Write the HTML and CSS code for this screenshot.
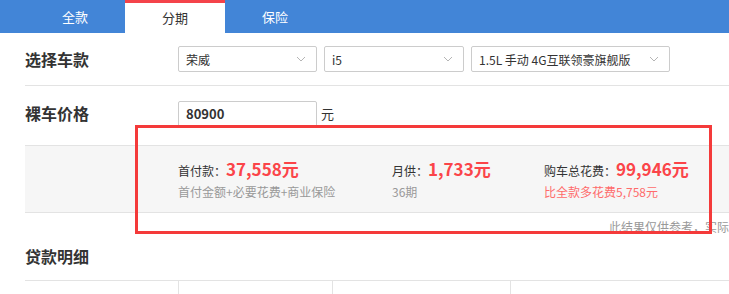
FILE: index.html
```html
<!DOCTYPE html>
<html lang="zh-CN">
<head>
  <meta charset="UTF-8">
  <title>购车计算器 - 分期</title>
  <link rel="stylesheet" href="styles.css">
</head>
<body>
  <div class="page">
    <!-- 顶部标签 -->
    <div class="tabs">
      <span class="tab">全款</span>
      <span class="tab active">分期</span>
      <span class="tab">保险</span>
    </div>

    <!-- 选择车款 -->
    <div class="row row-select">
      <div class="label">选择车款</div>
      <div class="controls">
        <div class="select w1"><span>荣威</span><svg class="arrow" viewBox="0 0 10 6"><path d="M1 1l4 4 4-4" fill="none" stroke="#b5b5b5" stroke-width="1"/></svg></div>
        <div class="select w2"><span>i5</span><svg class="arrow" viewBox="0 0 10 6"><path d="M1 1l4 4 4-4" fill="none" stroke="#b5b5b5" stroke-width="1"/></svg></div>
        <div class="select w3"><span>1.5L 手动 4G互联领豪旗舰版</span><svg class="arrow" viewBox="0 0 10 6"><path d="M1 1l4 4 4-4" fill="none" stroke="#b5b5b5" stroke-width="1"/></svg></div>
      </div>
    </div>

    <!-- 裸车价格 -->
    <div class="row row-price">
      <div class="label">裸车价格</div>
      <div class="controls">
        <div class="price-input">80900</div>
        <span class="unit">元</span>
      </div>
    </div>

    <!-- 结果 -->
    <div class="result">
      <div class="result-item first">
        <div class="line">首付款：<span class="num">37,558元</span></div>
        <div class="sub">首付金额+必要花费+商业保险</div>
      </div>
      <div class="result-item">
        <div class="line">月供：<span class="num">1,733元</span></div>
        <div class="sub">36期</div>
      </div>
      <div class="result-item">
        <div class="line">购车总花费：<span class="num">99,946元</span></div>
        <div class="sub sub-red">比全款多花费5,758元</div>
      </div>
    </div>
    <div class="note">此结果仅供参考，实际</div>

    <!-- 贷款明细 -->
    <h2 class="section-title">贷款明细</h2>
    <div class="detail-table">
      <div class="cell"></div>
      <div class="cell"></div>
      <div class="cell"></div>
      <div class="cell"></div>
    </div>

    <!-- 标注框 -->
    <div class="highlight"></div>
  </div>
</body>
</html>
```

FILE: styles.css
```css
/* 页面基础 */
html, body {
  margin: 0;
  padding: 0;
  overflow: hidden;
}
body {
  font-family: "Noto Sans CJK SC", "Noto Sans", sans-serif;
  color: #333;
  background-color: #fff;
}
.page {
  position: relative;
  width: 729px;
  height: 294px;
  overflow: hidden;
}

/* 标签栏 */
.tabs {
  display: flex;
  height: 33px;
  padding-left: 25px;
  background-color: #4285d7;
}
.tab {
  width: 100px;
  line-height: 33px;
  text-align: center;
  font-size: 13px;
  color: #fff;
}
.tab.active {
  background-color: #fff;
  color: #333;
  border-top: 3px solid #f4434a;
  line-height: 30px;
}

/* 表单行 */
.row {
  display: flex;
  align-items: center;
  margin-left: 25px;
}
.row-select {
  padding: 13px 0;
  border-bottom: 1px solid #e3e3e3;
}
.row-price {
  padding: 15px 0 0;
  height: 44px;
  align-items: flex-start;
}
.row-price .label {
  line-height: 25px;
}
.label {
  width: 153px;
  font-size: 16px;
  font-weight: bold;
  color: #333;
}
.controls {
  display: flex;
  align-items: center;
  gap: 7px;
}

/* 下拉框 */
.select {
  display: flex;
  align-items: center;
  justify-content: space-between;
  box-sizing: border-box;
  height: 26px;
  padding: 0 10px 0 7px;
  border: 1px solid #ccc;
  border-radius: 2px;
  font-size: 12px;
  color: #333;
}
.select.w1 { width: 139px; }
.select.w2 { width: 140px; }
.select.w3 { width: 199px; }
.arrow {
  width: 10px;
  height: 6px;
}

/* 价格输入 */
.price-input {
  box-sizing: border-box;
  width: 139px;
  height: 26px;
  padding: 0 7px;
  line-height: 24px;
  border: 1px solid #ccc;
  border-radius: 2px;
  font-size: 13px;
  font-weight: bold;
  color: #333;
}
.unit {
  margin-left: -3px;
  font-size: 13px;
  line-height: 24px;
}

/* 结果区 */
.result {
  display: flex;
  align-items: center;
  margin-left: 25px;
  height: 66px;
  background-color: #f6f6f6;
  border-top: 1px solid #e3e3e3;
  border-bottom: 1px solid #e3e3e3;
}
.result-item {
  width: 152px;
}
.result-item.first {
  margin-left: 153px;
  width: 214px;
}
.line {
  font-size: 12px;
  color: #333;
  line-height: 22px;
}
.num {
  font-size: 17px;
  font-weight: bold;
  color: #fb4449;
}
.sub {
  margin-top: 1px;
  font-size: 12px;
  line-height: 18px;
  color: #999;
}
.sub-red {
  color: #ff6b6b;
}
.note {
  padding: 5px 0 0 609px;
  white-space: nowrap;
  font-size: 12px;
  line-height: 17px;
  color: #999;
}

/* 贷款明细 */
.section-title {
  margin: 9px 0 0 25px;
  font-size: 16px;
  font-weight: bold;
  line-height: 24px;
  color: #333;
}
.detail-table {
  display: flex;
  margin: 12px 0 0 25px;
  border-top: 1px solid #e3e3e3;
  height: 30px;
}
.detail-table .cell {
  width: 153px;
  border-left: 1px solid #e3e3e3;
}
.detail-table .cell:first-child {
  border-left: none;
}
.detail-table .cell:nth-child(3) {
  width: 177px;
}
.detail-table .cell:last-child {
  flex: 1;
}

/* 红色标注框 */
.highlight {
  position: absolute;
  left: 135px;
  top: 125px;
  width: 577px;
  height: 109px;
  box-sizing: border-box;
  border: 3px solid #f43a3a;
}
```
